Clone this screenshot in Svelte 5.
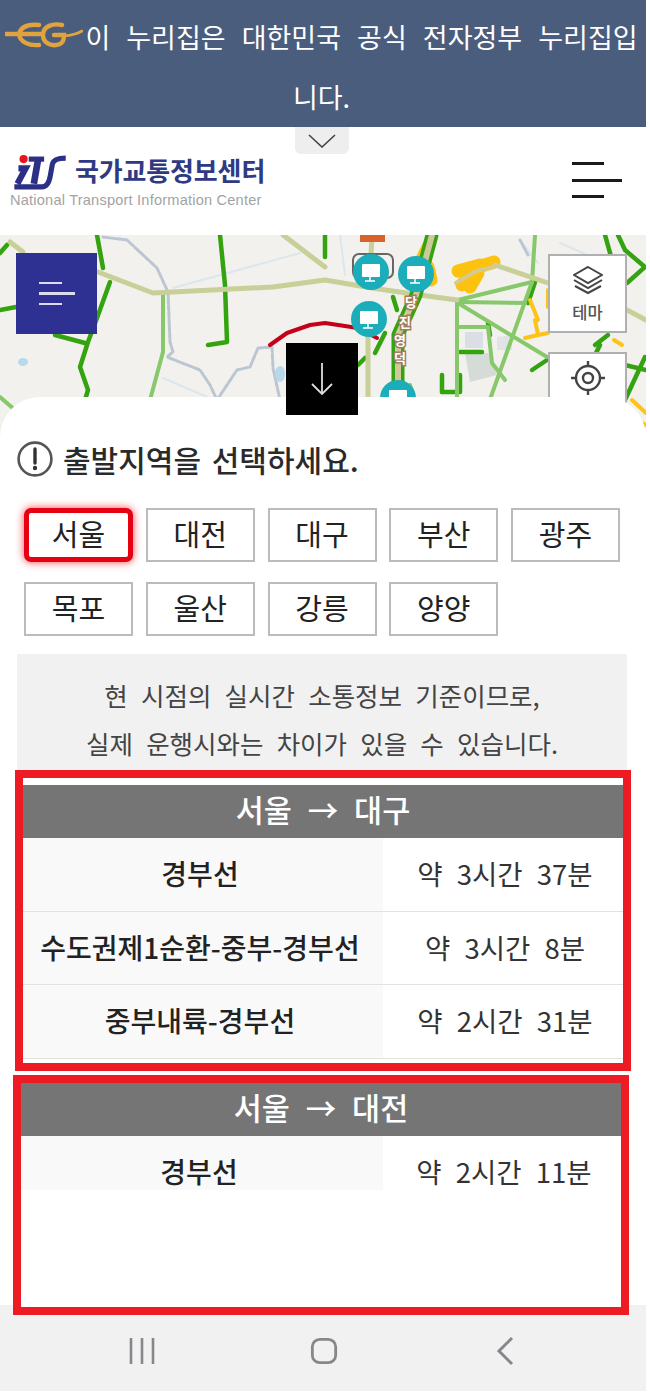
<script lang="ts">
  const regions = ["서울", "대전", "대구", "부산", "광주", "목포", "울산", "강릉", "양양"];
  const selected = "서울";

  const routes = [
    {
      title: "서울 → 대구",
      rows: [
        ["경부선", "약 3시간 37분"],
        ["수도권제1순환-중부-경부선", "약 3시간 8분"],
        ["중부내륙-경부선", "약 2시간 31분"],
      ],
    },
    { title: "서울 → 대전", rows: [["경부선", "약 2시간 11분"]] },
  ];

  // map lines, coordinates are relative to the map box (y - 235)
  const streams = [
    "163,143 207,162",
    "173,53 300,18",
    "340,0 345,40",
    "520,5 538,28",
    "560,8 610,30",
  ];
  const borders = [
    "103,2 127,5 157,33 168,57 170,107 173,117 167,122 200,135 210,150 217,165",
    "217,165 237,135 250,132 258,113 272,112 273,133 280,165",
    "520,5 528,20",
  ];
  const green = [
    "97,0 103,33",
    "110,47 97,83 88,107 80,132 88,155 85,165",
    "55,100 85,108",
    "0,75 16,72",
    "0,18 7,10",
    "220,0 225,50 227,107 208,110",
    "325,0 325,22",
    "393,62 397,75",
    "385,98 375,118",
    "358,130 365,123",
    "535,47 528,68",
    "460,117 482,117",
    "488,88 490,100",
    "532,135 547,125",
    "442,157 460,157 460,140",
    "442,140 442,157",
    "605,0 612,25",
    "618,0 625,15 645,32 627,48 612,40",
    "595,110 608,100",
    "600,110 590,130",
    "645,122 625,165",
    "625,130 646,135",
  ];
  const light = [
    "163,60 163,117 150,165",
    "0,162 15,175",
    "535,0 532,47",
    "457,65 457,170",
    "458,65 532,47",
    "458,67 525,68",
    "458,68 547,122",
    "532,47 488,170",
    "457,92 488,92 492,128 505,145",
    "410,150 416,170",
  ];
  const khaki = [
    "10,7 23,17",
    "98,37 153,58 273,52 325,45 372,53 420,60 457,65",
    "283,0 325,32",
    "495,30 548,48",
    "627,75 646,85",
    "368,100 368,165",
    "372,0 370,40",
  ];
  const yellow = [
    "535,85 538,100 525,103",
    "538,100 548,98",
    "548,55 548,72",
    "530,65 538,85",
    "580,47 590,45",
    "632,165 646,178",
    "622,177 646,190",
    "614,105 622,110",
  ];
  const blob = [
    "462,50 472,34 494,27",
    "458,36 480,30",
    "470,52 478,38",
    "428,12 420,28",
    "428,32 431,45",
  ];
  const pins = [
    [371, 37],
    [416, 39],
    [369, 84],
    [398, 163],
  ];
  const roadLabel = [
    ["당", 411, 72],
    ["진", 405, 92],
    ["영", 400, 110],
    ["덕", 400, 128],
  ];
</script>

<div class="page">
  <div class="banner">
    <svg class="eg" viewBox="0 0 78 26" aria-hidden="true">
      <g fill="none" stroke="#e0a33e" stroke-width="4.4" stroke-linecap="round">
        <path d="M1 12H36" />
        <path d="M14 12C16 4 24 2 34 3M14 12C15 20 24 24 34 23" />
        <path d="M57 3C48 1 38 4 38 13C38 22 48 25 55 22C59 20 59 16 59 13H49" />
        <path d="M59 14Q70 13 77 9" stroke-width="2.6" />
      </g>
    </svg><span class="banner-text">이 누리집은 대한민국 공식 전자정부 누리집입니다.</span>
  </div>

  <div class="toggle">
    <svg width="28" height="14" viewBox="0 0 28 14" aria-hidden="true">
      <path d="M1 1L14 13L27 1" fill="none" stroke="#444" stroke-width="1.6" />
    </svg>
  </div>

  <header>
    <div class="brand">
      <svg class="its" viewBox="0 0 54 36" aria-hidden="true">
        <g fill="none" stroke="#2b2f86">
          <path d="M7 13H14L6 28" stroke-width="6" />
          <path d="M17 4H32" stroke-width="5" />
          <path d="M26 5L22 28" stroke-width="6.5" />
          <path d="M3 31H30C35 31 37 26 38 20L40 9C41 5 44 3 53 3" stroke-width="5" />
        </g>
        <circle cx="12" cy="4" r="4" fill="#e8161c" />
      </svg>
      <div class="brand-text">
        <strong>국가교통정보센터</strong>
        <small>National Transport Information Center</small>
      </div>
    </div>
    <button class="burger" aria-label="메뉴">
      <i></i><i class="long"></i><i></i>
    </button>
  </header>

  <section class="map">
    <svg class="tiles" width="646" height="210" viewBox="0 0 646 210" aria-hidden="true">
      <rect width="646" height="210" fill="#f2f1ed" />
      <g fill="none" stroke-linecap="round" stroke-linejoin="round">
        {#each streams as p}
          <polyline points={p} stroke="#dbe6ee" stroke-width="2" />
        {/each}
        {#each borders as p}
          <polyline points={p} stroke="#bcc6d2" stroke-width="3" stroke-dasharray="5 2" />
        {/each}
        <ellipse cx="23" cy="127" rx="5" ry="4" fill="#b8d8ec" />
        <ellipse cx="280" cy="139" rx="5" ry="8" fill="#b8d8ec" />
        <polygon points="465,118 488,118 497,140 470,147" fill="#d5dbd6" />
        <polygon points="465,97 483,97 483,113 465,113" fill="#dcdee6" />
        <polygon points="497,102 512,100 512,115 497,115" fill="#e2e3e6" />
        {#each green as p}
          <polyline points={p} stroke="#33a30f" stroke-width="4.5" />
        {/each}
        {#each light as p}
          <polyline points={p} stroke="#86c86a" stroke-width="4" />
        {/each}
        {#each blob as p}
          <polyline points={p} stroke="#fcc20e" stroke-width="13" />
        {/each}
        {#each khaki as p}
          <polyline points={p} stroke="#c8cf98" stroke-width="5" />
        {/each}
        {#each yellow as p}
          <polyline points={p} stroke="#fcc419" stroke-width="4" />
        {/each}
        <polyline points="456,48 476,36 494,32" stroke="#d8c98c" stroke-width="4" />
        <polyline points="270,110 287,98 310,90 325,88 358,93 377,103" stroke="#c4001a" stroke-width="4" />
        <polyline points="432,0 416,60 398,100 398,170" stroke="#33a30f" stroke-width="13" />
        <polyline points="432,0 416,60 398,100 398,170" stroke="#cfc89a" stroke-width="6" />
        <rect x="353" y="19" width="40" height="24" rx="6" stroke="#666" stroke-width="2" />
      </g>
      {#each roadLabel as [ch, x, y]}
        <text class="road" {x} {y}>{ch}</text>
      {/each}
      <rect x="360" y="0" width="25" height="7" fill="#d8622a" />
      {#each pins as [x, y]}
        <circle cx={x} cy={y} r="18" fill="#1cadba" />
        <rect x={x - 9} y={y - 8} width="18" height="13" rx="1" fill="#fff" />
        <path d={`M${x - 6} ${y + 9}h10M${x - 1} ${y + 5}v4`} stroke="#fff" stroke-width="1.5" />
      {/each}
    </svg>

    <button class="map-menu" aria-label="메뉴">
      <i></i><i class="long"></i><i></i>
    </button>

    <button class="map-tool theme">
      <svg width="30" height="30" viewBox="0 0 30 30" aria-hidden="true">
        <g fill="none" stroke="#444" stroke-width="2">
          <path d="M15 2L29 10L15 18L1 10Z" />
          <path d="M1 15L15 23L29 15" />
          <path d="M2 21L15 28L28 21" />
        </g>
      </svg>
      <span>테마</span>
    </button>
    <button class="map-tool locate" aria-label="현재 위치">
      <svg width="36" height="36" viewBox="0 0 36 36" aria-hidden="true">
        <g fill="none" stroke="#444">
          <circle cx="18" cy="18" r="12" stroke-width="2.4" />
          <circle cx="18" cy="18" r="5" stroke-width="2.4" />
          <path d="M18 1V6M18 30V35M1 18H6M30 18H35" stroke-width="2.4" />
        </g>
      </svg>
    </button>
  </section>

  <main class="sheet">
    <button class="collapse" aria-label="접기">
      <svg width="24" height="34" viewBox="0 0 24 34" aria-hidden="true">
        <path d="M12 1V32M2 22L12 32L22 22" fill="none" stroke="#ddd" stroke-width="1.8" />
      </svg>
    </button>

    <h2>
      <svg width="36" height="36" viewBox="0 0 36 36" aria-hidden="true">
        <circle cx="18" cy="18" r="16.4" fill="none" stroke="#555" stroke-width="2.6" />
        <path d="M18 8V22" stroke="#333" stroke-width="3.4" stroke-linecap="round" />
        <circle cx="18" cy="27" r="2.2" fill="#333" />
      </svg>
      <span>출발지역을 선택하세요.</span>
    </h2>

    <div class="regions">
      {#each regions as name}
        <button class="region" class:active={name === selected}>{name}</button>
      {/each}
    </div>

    <p class="notice">현 시점의 실시간 소통정보 기준이므로,<br />실제 운행시와는 차이가 있을 수 있습니다.</p>

    {#each routes as route, i}
      <section class="route" class:second={i === 1}>
        <h3>{route.title}</h3>
        {#each route.rows as row}
          <div class="row">
            <div class="name">{row[0]}</div>
            <div class="time">{row[1]}</div>
          </div>
        {/each}
      </section>
    {/each}
  </main>

  <nav>
    <svg width="26" height="28" viewBox="0 0 26 28" aria-hidden="true">
      <path d="M2 1V27M13 1V27M24 1V27" stroke="#85878a" stroke-width="2.6" />
    </svg>
    <svg class="home" width="28" height="28" viewBox="0 0 30 30" aria-hidden="true">
      <rect x="2.5" y="2.5" width="25" height="25" rx="8" fill="none" stroke="#85878a" stroke-width="3" />
    </svg>
    <svg width="18" height="30" viewBox="0 0 18 30" aria-hidden="true">
      <path d="M16 2L3 15L16 28" fill="none" stroke="#85878a" stroke-width="3" />
    </svg>
  </nav>
</div>

<style>
  :global(body) {
    background: #fff;
  }

  .page {
    position: relative;
    width: 646px;
    overflow: hidden;
    font-family: "Noto Sans CJK KR", "Noto Sans", sans-serif;
    color: #222;
  }

  button {
    font-family: inherit;
    cursor: pointer;
  }

  .banner {
    height: 127px;
    box-sizing: border-box;
    padding: 7px 7px 0 4px;
    background: #4a5d7d;
    color: #fff;
    font-size: 27px;
    line-height: 60px;
    text-align: center;
    word-spacing: 10px;
    word-break: break-all;
  }

  .eg {
    width: 78px;
    height: 26px;
    margin-right: 2px;
    vertical-align: 0;
  }

  .toggle {
    position: absolute;
    top: 127px;
    left: 295px;
    display: flex;
    align-items: center;
    justify-content: center;
    width: 54px;
    height: 27px;
    border-radius: 0 0 6px 6px;
    background: #eee;
  }

  header {
    display: flex;
    align-items: flex-start;
    justify-content: space-between;
    height: 108px;
    box-sizing: border-box;
    padding: 28px 24px 0 10px;
    background: #fff;
  }

  .brand {
    display: flex;
    position: relative;
  }

  .its {
    position: absolute;
    top: 0;
    left: 1px;
    width: 56px;
    height: 37px;
  }

  .brand-text {
    display: flex;
    flex-direction: column;
  }

  .brand-text strong {
    margin-left: 65px;
    color: #2f3a85;
    font-size: 26px;
    font-weight: 700;
    line-height: 30px;
    letter-spacing: -0.15px;
  }

  .brand-text small {
    margin-top: 6px;
    color: #a3a3a3;
    font-family: "Liberation Sans", sans-serif;
    font-size: 14.6px;
    line-height: 18px;
    letter-spacing: 0.2px;
  }

  .burger {
    display: flex;
    flex-direction: column;
    gap: 13.5px;
    width: 50px;
    margin-top: 7px;
    padding: 0;
    border: 0;
    background: none;
  }

  .burger i {
    display: block;
    width: 32px;
    height: 3px;
    background: #1a1a1a;
  }

  .burger i.long {
    width: 50px;
  }

  .map {
    position: relative;
    height: 210px;
  }

  .tiles {
    display: block;
  }

  .road {
    fill: #fff;
    stroke: #a27c5e;
    stroke-width: 3px;
    paint-order: stroke;
    font-size: 13px;
    font-weight: 700;
    text-anchor: middle;
  }

  .map-menu {
    position: absolute;
    top: 18px;
    left: 16px;
    display: flex;
    flex-direction: column;
    align-items: flex-start;
    justify-content: center;
    gap: 8px;
    width: 81px;
    height: 81px;
    padding: 0 0 0 23px;
    border: 0;
    background: #2e3192;
  }

  .map-menu i {
    display: block;
    width: 23px;
    height: 2.6px;
    background: #dcdcf0;
  }

  .map-menu i.long {
    width: 36px;
  }

  .map-tool {
    position: absolute;
    left: 548px;
    width: 79px;
    height: 79px;
    padding: 0;
    border: 2px solid #b0b0b0;
    background: #fff;
    box-sizing: border-box;
  }

  .theme {
    top: 19px;
    display: flex;
    flex-direction: column;
    align-items: center;
    padding-top: 9px;
    color: #555;
    font-size: 16.5px;
    font-weight: 500;
  }

  .theme span {
    line-height: 22px;
    margin-top: 6px;
  }

  .locate {
    top: 117px;
    padding-bottom: 24px;
  }

  .sheet {
    position: relative;
    margin-top: -48px;
    height: 908px;
    box-sizing: border-box;
    padding-top: 42px;
    border-radius: 40px 40px 0 0;
    background: #fff;
  }

  .collapse {
    position: absolute;
    top: -54px;
    left: 286px;
    display: flex;
    align-items: center;
    justify-content: center;
    width: 72px;
    height: 72px;
    padding: 0;
    border: 0;
    background: #000;
  }

  h2 {
    display: flex;
    align-items: center;
    gap: 10px;
    height: 40px;
    margin: 0 0 0 17px;
    color: #2a2a2a;
    font-size: 30px;
    font-weight: 500;
    word-spacing: 4px;
  }

  .regions {
    display: grid;
    grid-template-columns: repeat(5, 109px);
    gap: 20px 12.75px;
    margin: 29px 0 0 24px;
  }

  .region {
    height: 54px;
    padding: 0 0 3px;
    border: 2px solid #bbb;
    background: #fff;
    color: #222;
    font-size: 29px;
    line-height: 1;
  }

  .region.active {
    border: 5px solid #e60012;
    border-radius: 7px;
    box-shadow: 0 0 8px rgba(245, 0, 20, 0.75);
  }

  .notice {
    box-sizing: border-box;
    width: 610px;
    height: 116px;
    margin: 18px 0 0 17px;
    padding-top: 17px;
    background: #f1f1f1;
    color: #444;
    font-size: 25.5px;
    line-height: 48px;
    text-align: center;
    word-spacing: 7.5px;
  }

  .route {
    box-sizing: border-box;
    width: 616px;
    height: 301px;
    margin-left: 15px;
    padding-top: 7px;
    border: 8px solid #ed1c24;
    background: #fff;
  }

  .route.second {
    position: relative;
    z-index: 1;
    height: 240px;
    margin: 4px 0 0 13px;
    padding-top: 0;
  }

  h3 {
    height: 53px;
    margin: 0;
    background: #757575;
    color: #fff;
    font-size: 30.5px;
    font-weight: 500;
    line-height: 48px;
    text-align: center;
    word-spacing: 9px;
  }

  .row {
    display: grid;
    grid-template-columns: 360px 1fr;
    grid-template-rows: 72.5px;
    height: 73.5px;
    border-bottom: 1px solid #e2e2e2;
    box-sizing: border-box;
    font-size: 27.5px;
    line-height: 70px;
    text-align: center;
    word-spacing: 8px;
  }

  .second .row {
    grid-template-columns: 362px 1fr;
    grid-template-rows: 54px;
    height: 54px;
    border-bottom: 0;
  }

  .name {
    padding-right: 6px;
    background: #f9f9f9;
    color: #222;
    font-size: 28px;
    font-weight: 500;
    word-spacing: 0;
    overflow: visible;
    min-height: 0;
  }

  .second .name,
  .second .time {
    height: 54px;
  }

  .time {
    padding-left: 4px;
    color: #333;
  }

  .home {
    margin-right: 4px;
  }

  nav {
    display: flex;
    align-items: center;
    justify-content: space-between;
    height: 86px;
    box-sizing: border-box;
    padding: 6px 132px 0 129px;
    background: #f1f1f1;
  }
</style>
